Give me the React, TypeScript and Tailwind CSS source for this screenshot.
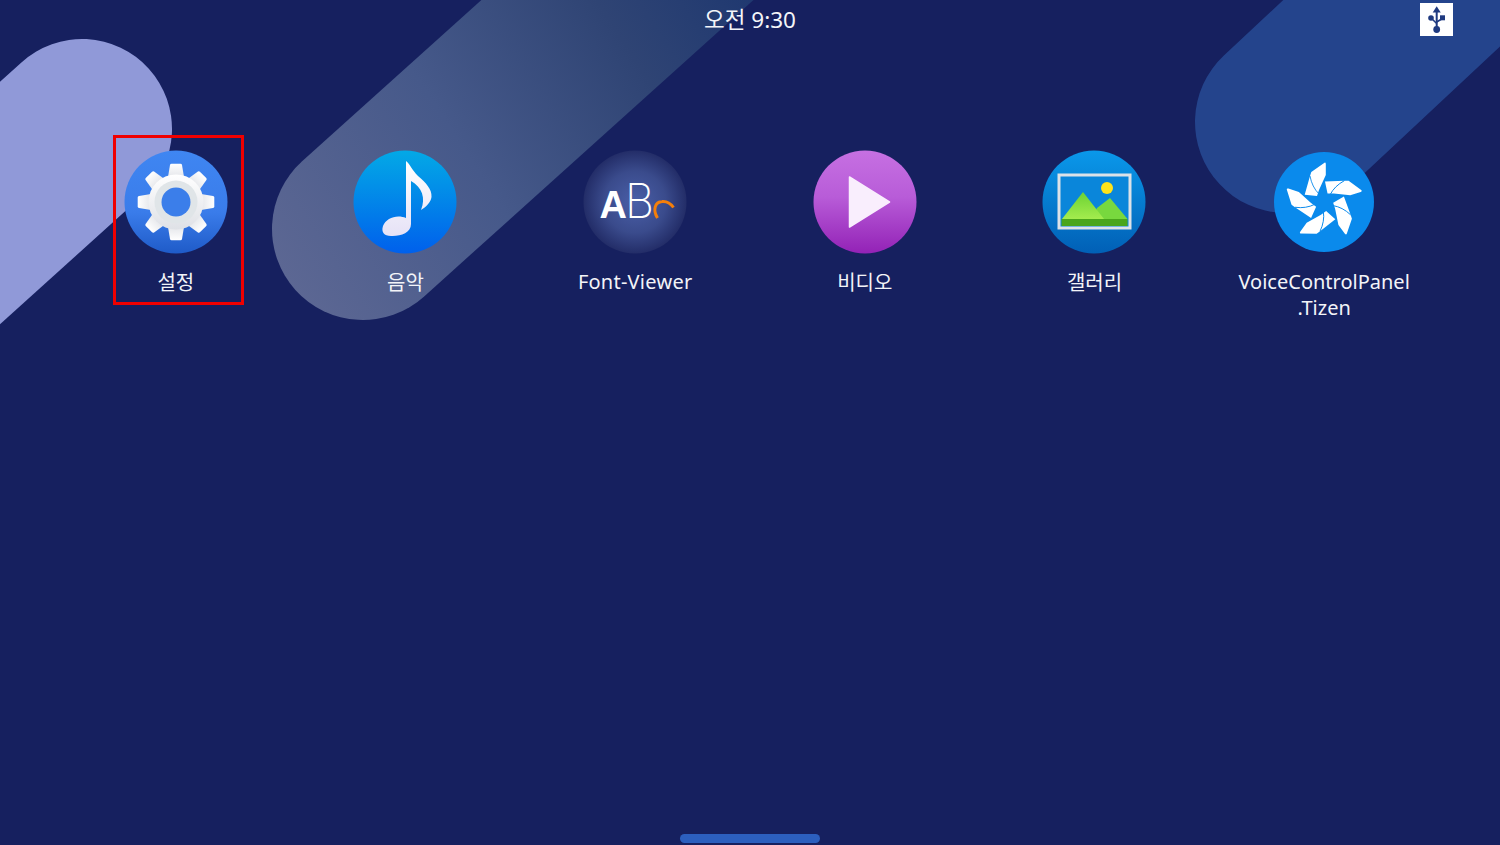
const apps = [
  { name: "설정", icon: <SettingsIcon />, labelClass: "mt-[16px]" },
  { name: "음악", icon: <MusicIcon />, labelClass: "mt-[16px]" },
  { name: "Font-Viewer", icon: <FontIcon />, labelClass: "mt-[15px] tracking-[0.25px]" },
  { name: "비디오", icon: <VideoIcon />, labelClass: "mt-[16px]" },
  { name: "갤러리", icon: <GalleryIcon />, labelClass: "mt-[16px]" },
  { name: "VoiceControlPanel .Tizen", icon: <TizenIcon />, labelClass: "mt-[15px]" },
];

function SettingsIcon() {
  return (
    <svg viewBox="0 0 104 104" className="h-[104px] w-[104px]">
      <defs>
        <linearGradient id="gearBg" x1="0" y1="0" x2="0" y2="1">
          <stop offset="0" stopColor="#3f86f2" />
          <stop offset="0.6" stopColor="#3a7cea" />
          <stop offset="1" stopColor="#1f5bc8" />
        </linearGradient>
        <linearGradient id="gearFill" x1="0" y1="0" x2="0" y2="1">
          <stop offset="0" stopColor="#ffffff" />
          <stop offset="1" stopColor="#dfe1e6" />
        </linearGradient>
      </defs>
      <circle cx="52" cy="52" r="51.5" fill="url(#gearBg)" />
      <g fill="url(#gearFill)">
        {[0, 45, 90, 135, 180, 225, 270, 315].map((deg) => (
          <path
            key={deg}
            d="M43.5 30 L46 15 Q46.3 13.7 47.5 13.7 H56.5 Q57.7 13.7 58 15 L60.5 30 Z"
            transform={`rotate(${deg} 52 52)`}
          />
        ))}
        <circle cx="52" cy="52" r="27.5" />
      </g>
      <circle cx="52" cy="52" r="21.5" fill="#e0e5e8" />
      <circle cx="52" cy="52" r="14.5" fill="#3b7eea" />
    </svg>
  );
}

function MusicIcon() {
  return (
    <svg viewBox="0 0 104 104" className="h-[104px] w-[104px]">
      <defs>
        <linearGradient id="musicBg" x1="0" y1="0" x2="0" y2="1">
          <stop offset="0" stopColor="#03a9e6" />
          <stop offset="1" stopColor="#0060ec" />
        </linearGradient>
        <linearGradient id="musicNote" x1="0" y1="0" x2="0" y2="1">
          <stop offset="0" stopColor="#ffffff" />
          <stop offset="1" stopColor="#e6e2f6" />
        </linearGradient>
      </defs>
      <circle cx="52" cy="52" r="51.5" fill="url(#musicBg)" />
      <path
        d="M53 11 C57 14 59 20 65 26 C73 33 79 39 78.5 47 C78 52 73 57 68 60 C73 48 69 37 58 31 L58 74 C58 83 47 86.5 38 86 C31 86 28 82 30 76 C33 68 44 64 53 68 Z"
        fill="url(#musicNote)"
      />
    </svg>
  );
}

function FontIcon() {
  return (
    <svg viewBox="0 0 104 104" className="h-[104px] w-[104px]">
      <defs>
        <radialGradient id="fontBg">
          <stop offset="0" stopColor="#4a5fa8" />
          <stop offset="0.6" stopColor="#3a4b8c" />
          <stop offset="1" stopColor="#232d68" />
        </radialGradient>
      </defs>
      <circle cx="52" cy="52" r="51.5" fill="url(#fontBg)" />
      <text x="16.5" y="68" fontFamily="Liberation Sans" fontWeight="700" fontSize="38" fill="#ffffff">
        A
      </text>
      <text
        x="42"
        y="68"
        fontFamily="Inter"
        fontWeight="200"
        fontSize="48"
        fill="#ffffff"
        textLength={29}
        lengthAdjust="spacingAndGlyphs"
      >
        B
      </text>
      <path d="M74.5 68 C69.5 60 72 52 79 51.5 C84 51 88 54 90.5 57.5" fill="none" stroke="#f57f0a" strokeWidth="3" />
    </svg>
  );
}

function VideoIcon() {
  return (
    <svg viewBox="0 0 104 104" className="h-[104px] w-[104px]">
      <defs>
        <linearGradient id="videoBg" x1="0" y1="0" x2="0" y2="1">
          <stop offset="0" stopColor="#c670e2" />
          <stop offset="0.45" stopColor="#b85cd8" />
          <stop offset="1" stopColor="#9322b6" />
        </linearGradient>
      </defs>
      <circle cx="52" cy="52" r="51.5" fill="url(#videoBg)" />
      <path d="M36.5 27 L76.5 52 L36.5 77 Z" fill="#f9eefd" stroke="#f9eefd" strokeWidth="1.5" strokeLinejoin="round" />
    </svg>
  );
}

function GalleryIcon() {
  return (
    <svg viewBox="0 0 104 104" className="h-[104px] w-[104px]">
      <defs>
        <linearGradient id="galleryBg" x1="0" y1="0" x2="0" y2="1">
          <stop offset="0" stopColor="#0a98ea" />
          <stop offset="1" stopColor="#0160b6" />
        </linearGradient>
        <linearGradient id="hillBig" x1="0" y1="0" x2="0" y2="1">
          <stop offset="0" stopColor="#6bd233" />
          <stop offset="1" stopColor="#a4ec4e" />
        </linearGradient>
      </defs>
      <circle cx="52" cy="52" r="51.5" fill="url(#galleryBg)" />
      <rect x="17" y="25" width="71" height="53" fill="#0a86da" stroke="#dce2e8" strokeWidth="3" />
      <circle cx="65" cy="38" r="6" fill="#ffe31a" />
      <path d="M55 58 L68 48 L85.5 69 H50 Z" fill="#78d83e" />
      <path d="M41 42 L62 69 H20 Z" fill="url(#hillBig)" />
      <rect x="19.5" y="69" width="66" height="7" fill="#49a51b" />
    </svg>
  );
}

function TizenIcon() {
  return (
    <svg viewBox="0 0 100 100" className="h-[100px] w-[100px]">
      <circle cx="50" cy="50" r="50" fill="#0a8aec" />
      <g transform="translate(50 50)">
        {[0, 72, 144, 216, 288].map((deg) => (
          <g key={deg} transform={`rotate(${deg})`}>
            <path
              d="M-12.7 -30 L0.5 -39.3 Q1.7 -39.8 1.8 -38 L1.8 -27 L-5 -12 L-7 -6 L-19.3 -7.3 L-14 -26 Z"
              fill="#ffffff"
            />
            <path d="M-14 -26 Q-12 -15 -5 -8" fill="none" stroke="#0a8aec" strokeWidth="0.9" />
          </g>
        ))}
      </g>
    </svg>
  );
}

function UsbIcon() {
  return (
    <svg viewBox="0 0 33 33" className="h-full w-full" fill="#1f3a80" stroke="none">
      <path d="M16.7 3.2 L20.7 9.4 H12.7 Z" />
      <rect x="15.7" y="8" width="2" height="18" />
      <circle cx="16.7" cy="26.5" r="3.4" />
      <circle cx="11" cy="15" r="2.8" />
      <rect x="20" y="12.3" width="5" height="5" />
      <path d="M11 15 L16.7 20.5 M22.5 15 L22.5 15.5 L16.7 19" stroke="#1f3a80" strokeWidth="1.6" fill="none" />
    </svg>
  );
}

function Backdrop() {
  return (
    <svg viewBox="0 0 1500 845" className="absolute inset-0 h-full w-full">
      <defs>
        <linearGradient id="band" gradientUnits="userSpaceOnUse" x1="300" y1="300" x2="760" y2="0">
          <stop offset="0" stopColor="#5c6793" />
          <stop offset="0.4" stopColor="#46598a" />
          <stop offset="0.75" stopColor="#2f4474" />
          <stop offset="1" stopColor="#1f3870" />
        </linearGradient>
      </defs>
      <line x1="82" y1="129" x2="-215" y2="397" stroke="#9099d8" strokeWidth="180" strokeLinecap="round" />
      <line x1="363" y1="229" x2="883" y2="-239" stroke="url(#band)" strokeWidth="182" strokeLinecap="round" />
      <line x1="1286" y1="122" x2="1651" y2="-219" stroke="#24448c" strokeWidth="182" strokeLinecap="round" />
    </svg>
  );
}

export default function App() {
  return (
    <div
      className="relative flex h-[845px] w-full flex-col overflow-hidden bg-[#16205f] text-[#f3f4f8]"
      style={{ fontFamily: '"Noto Sans", "Noto Sans CJK KR", sans-serif' }}
    >
      <Backdrop />

      <div className="relative grid h-[40px] grid-cols-[1fr_auto_1fr]">
        <div />
        <div className="flex items-center text-[22.5px] leading-none">오전 9:30</div>
        <div className="flex justify-end pr-[47px] pt-[3px]">
          <div className="h-[33px] w-[33px] bg-white">
            <UsbIcon />
          </div>
        </div>
      </div>

      <div className="relative mt-[110px] grid grid-cols-6 px-[61px]">
        {apps.map((app, index) => (
          <div key={index} className="relative flex flex-col items-center">
            {index === 0 && (
              <div className="absolute left-[52px] top-[-15px] h-[170px] w-[131px] border-[3px] border-[#f00000]" />
            )}
            <div className="flex h-[104px] w-[104px] items-center justify-center">{app.icon}</div>
            <div className={`${app.labelClass} w-[190px] text-center text-[20px] leading-[26px]`}>{app.name}</div>
          </div>
        ))}
      </div>

      <div className="relative mb-[2px] mt-auto flex justify-center">
        <div className="h-[9px] w-[140px] rounded-full bg-[#2c5fbe]" />
      </div>
    </div>
  );
}
